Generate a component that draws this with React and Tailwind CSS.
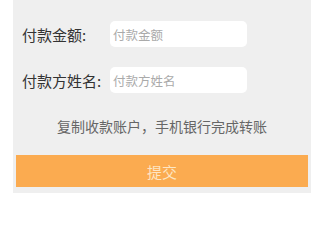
import React, { useState } from 'react';

const font = { fontFamily: '"Noto Sans CJK SC", "Noto Sans", sans-serif' };

const FormRow = ({ label, placeholder, value, onChange, className = '' }) => (
    <div className={`flex items-center pl-[9px] h-[26px] ${className}`}>
        <label className="w-[88px] shrink-0 text-[15px] leading-none text-[#333]">{label}</label>
        <input
            type="text"
            value={value}
            onChange={onChange}
            placeholder={placeholder}
            className="w-[137px] h-[26px] rounded-[5px] bg-white px-[3px] text-[12.5px] text-[#333] placeholder:text-[#aaa] outline-none"
        />
    </div>
);

const App = () => {
    const [amount, setAmount] = useState('');
    const [payer, setPayer] = useState('');

    return (
        <div className="bg-white h-[200px] w-[320px] overflow-hidden" style={font}>
            <div className="ml-[13px] w-[298px] bg-[#efefef] pt-[21px] pb-[6px]">
                <FormRow label="付款金额:" placeholder="付款金额" value={amount} onChange={(e) => setAmount(e.target.value)} />
                <FormRow
                    className="mt-[20px]"
                    label="付款方姓名:"
                    placeholder="付款方姓名"
                    value={payer}
                    onChange={(e) => setPayer(e.target.value)}
                />
                <p className="mt-[23px] text-center text-[14px] leading-[20px] text-[#666]">
                    复制收款账户，手机银行完成转账
                </p>
                <button
                    type="button"
                    className="mt-[19px] mx-[3px] w-[292px] h-[32px] bg-[#fbab50] text-[#fde6c4] text-[15px] leading-none"
                >
                    提交
                </button>
            </div>
        </div>
    );
};

export default App;
